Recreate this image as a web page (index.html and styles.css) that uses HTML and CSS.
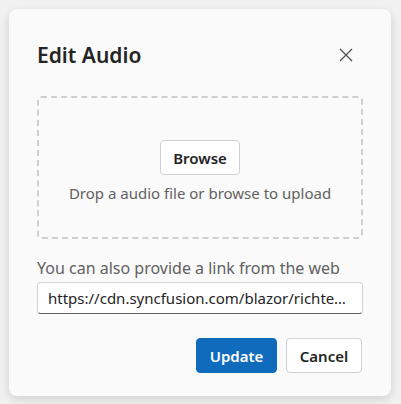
FILE: index.html
```html
<!DOCTYPE html>
<html>
<head>
    <title>Edit Audio</title>
    <link rel="stylesheet" href="styles.css">
</head>
<body>
    <div class="dialog">
        <div class="dialog-header">
            <h2 class="dialog-title">Edit Audio</h2>
            <button class="close-btn" aria-label="Close">
                <svg width="14" height="14" viewBox="0 0 14 14"><path d="M1 1 L13 13 M13 1 L1 13" stroke="#505050" stroke-width="1.3" fill="none"/></svg>
            </button>
        </div>

        <div class="dropzone">
            <button class="btn browse">Browse</button>
            <div class="drop-text">Drop a audio file or browse to upload</div>
        </div>

        <div class="link-label">You can also provide a link from the web</div>
        <input class="link-input" type="text" value="https://cdn.syncfusion.com/blazor/richtexteditor/audio/RTE-Audio.mp3">

        <div class="dialog-footer">
            <button class="btn primary">Update</button>
            <button class="btn">Cancel</button>
        </div>
    </div>
</body>
</html>
```

FILE: styles.css
```css
body { margin: 0; padding: 9px; background: #f1f1f1; font-family: "Segoe UI", "Noto Sans", sans-serif; color: #242424; }
.dialog { width: 382px; height: 387px; box-sizing: border-box; padding: 32px 28px 0 28px; background: #fafafa; border-radius: 8px; box-shadow: 0 3px 10px rgba(0,0,0,0.14); }
.dialog-header { display: flex; align-items: center; justify-content: space-between; height: 28px; }
.dialog-title { margin: 0; font-size: 21px; font-weight: 600; line-height: 28px; }
.close-btn { width: 24px; height: 24px; margin-right: 5px; padding: 0; border: none; background: none; display: flex; align-items: center; justify-content: center; }
.dropzone { margin-top: 27px; height: 143px; box-sizing: border-box; padding-top: 42px; border: 2px dashed #cfcfcf; border-radius: 4px; display: flex; flex-direction: column; align-items: center; gap: 8px; }
.btn { font-family: inherit; font-size: 15px; font-weight: 600; color: #242424; background: #fff; border: 1px solid #d1d1d1; border-radius: 4px; height: 35px; padding: 0 12px; }
.browse { width: 80px; }
.drop-text { font-size: 15px; color: #616161; line-height: 20px; }
.link-label { margin-top: 19px; font-size: 16px; color: #616161; line-height: 20px; }
.link-input { display: block; margin-top: 4px; width: 100%; height: 32px; box-sizing: border-box; padding: 0 10px; font-family: inherit; font-size: 15px; color: #242424; background: #fff; border: 1px solid #d1d1d1; border-bottom-color: #616161; border-radius: 4px; text-overflow: ellipsis; outline: none; }
.dialog-footer { display: flex; justify-content: flex-end; gap: 9px; margin-top: 24px; padding-right: 1px; }
.primary { background: #0f6cbd; border-color: #0f6cbd; color: #fff; width: 81px; }
.dialog-footer .btn:last-child { width: 76px; }
```
